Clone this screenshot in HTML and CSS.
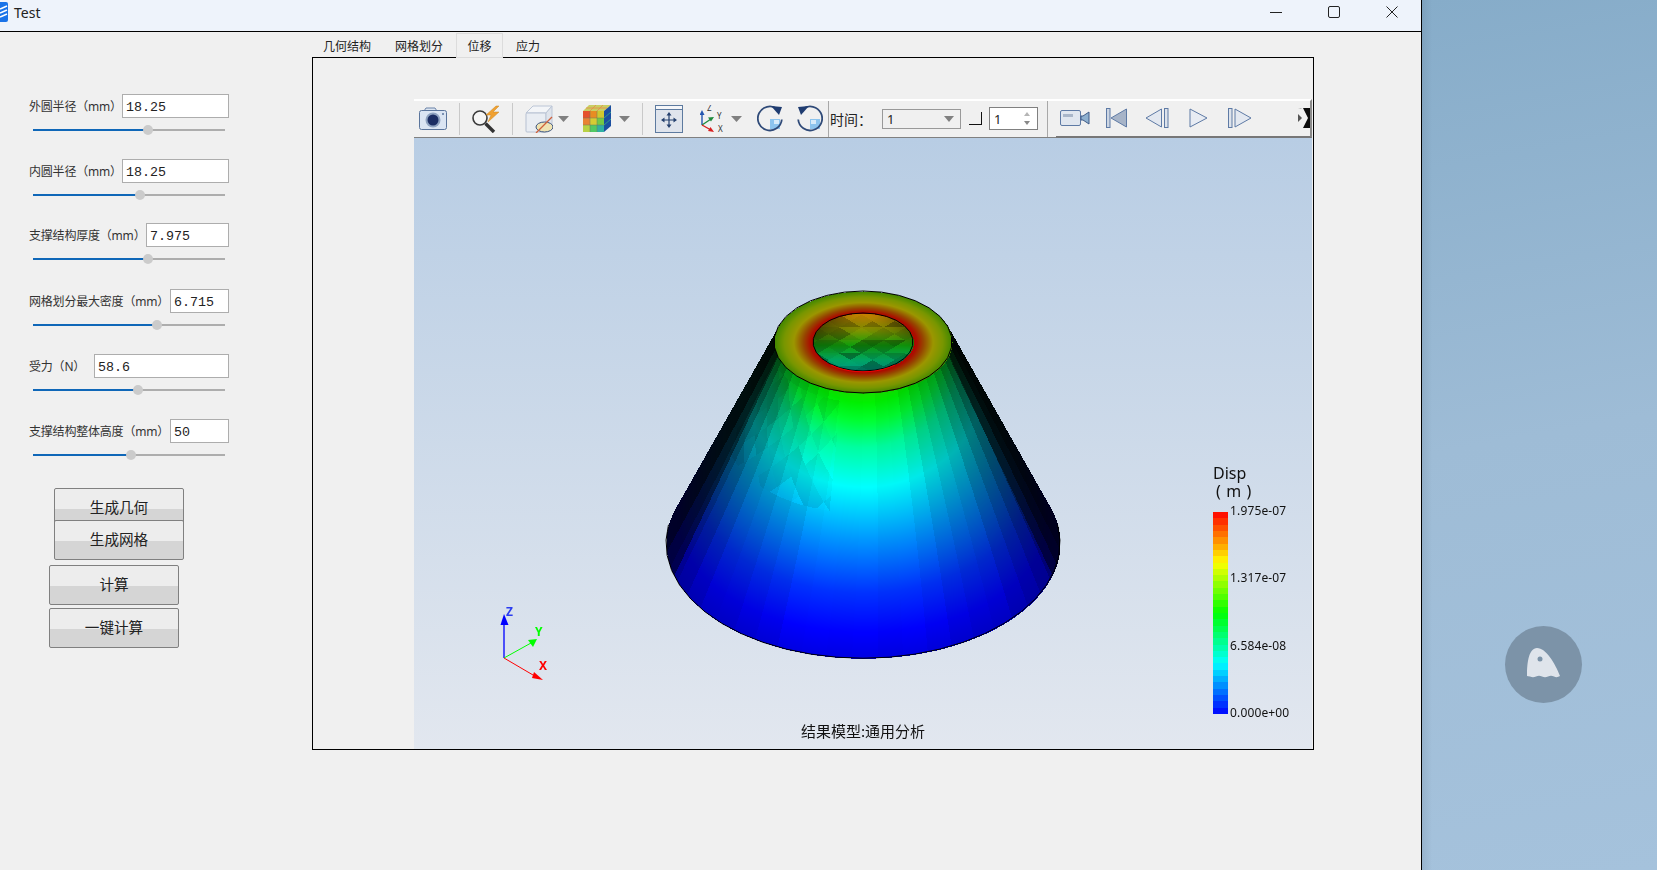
FILE: index.html
```html
<!DOCTYPE html>
<html lang="zh-CN">
<head>
<meta charset="utf-8">
<title>Test</title>
<link rel="stylesheet" href="styles.css">
</head>
<body>
<div class="window">
  <header class="titlebar">
    <svg class="app-icon" width="8" height="20" viewBox="0 0 8 20"><path d="M0 0H6Q8 0 8 2V18Q8 20 6 20H0Z" fill="#1a73e8"/><path d="M0 7L7 4M0 11L7 8M0 15L7 12" stroke="#fff" stroke-width="1.6"/></svg>
    <span class="app-title">Test</span>
    <div class="caption">
      <button class="cap-btn"><svg width="12" height="12" viewBox="0 0 12 12"><path d="M0 6.5H12" stroke="#222"/></svg></button>
      <button class="cap-btn"><svg width="12" height="12" viewBox="0 0 12 12"><rect x=".5" y=".5" width="11" height="11" rx="1.5" fill="none" stroke="#222"/></svg></button>
      <button class="cap-btn"><svg width="12" height="12" viewBox="0 0 12 12"><path d="M.5 .5L11.5 11.5M11.5 .5L.5 11.5" stroke="#222"/></svg></button>
    </div>
  </header>
  <div class="client">
    <aside class="params">
      <div class="param">
        <div class="field"><label>外圆半径（mm）</label><input class="w107" value="18.25"></div>
        <div class="slider"><i class="fill" style="width:115px"></i><i class="thumb"></i><i class="rest"></i></div>
      </div>
      <div class="param">
        <div class="field"><label>内圆半径（mm）</label><input class="w107" value="18.25"></div>
        <div class="slider"><i class="fill" style="width:107px"></i><i class="thumb"></i><i class="rest"></i></div>
      </div>
      <div class="param param-up">
        <div class="field"><label>支撑结构厚度（mm）</label><input class="w83" value="7.975"></div>
        <div class="slider"><i class="fill" style="width:115px"></i><i class="thumb"></i><i class="rest"></i></div>
      </div>
      <div class="param">
        <div class="field"><label>网格划分最大密度（mm）</label><input class="w59" value="6.715"></div>
        <div class="slider"><i class="fill" style="width:124px"></i><i class="thumb"></i><i class="rest"></i></div>
      </div>
      <div class="param">
        <div class="field"><label>受力（N）</label><input class="w135" value="58.6"></div>
        <div class="slider"><i class="fill" style="width:105px"></i><i class="thumb"></i><i class="rest"></i></div>
      </div>
      <div class="param">
        <div class="field"><label>支撑结构整体高度（mm）</label><input class="w59" value="50"></div>
        <div class="slider"><i class="fill" style="width:98px"></i><i class="thumb"></i><i class="rest"></i></div>
      </div>
      <div class="actions">
        <button class="push push-a">生成几何</button>
        <button class="push push-b">生成网格</button>
        <button class="push push-c">计算</button>
        <button class="push push-d">一键计算</button>
      </div>
    </aside>
    <main class="workspace">
      <nav class="tabs">
        <span class="tab">几何结构</span>
        <span class="tab">网格划分</span>
        <span class="tab tab-active">位移</span>
        <span class="tab">应力</span>
      </nav>
      <section class="panel">
        <div class="viewer">
          <div class="toolbars">
            <div class="bar bar-main">
              <svg class="t-cam" width="28" height="23" viewBox="0 0 28 23"><path d="M5 4L7 1H16L18 4" fill="#dce5f1" stroke="#6b83a8"/><rect x=".5" y="3.5" width="27" height="19" rx="2" fill="#dbe5f3" stroke="#5b759c"/><circle cx="14" cy="13" r="7.5" fill="#8ea2c0"/><circle cx="14" cy="13" r="5.5" fill="#1b2d63"/><circle cx="24" cy="7" r="1" fill="#5b759c"/></svg>
              <i class="sep"></i>
              <svg width="28" height="28" viewBox="0 0 28 28"><circle cx="8" cy="13" r="7" fill="#f6f6f6" stroke="#3a3a3a" stroke-width="1.6"/><path d="M13.5 18.5L22 27" stroke="#333" stroke-width="3.4"/><path d="M24 1L14 10H19L16 17L27 7H21L27 1Z" fill="#f0a030" stroke="#c98a2a" stroke-width=".5"/></svg>
              <i class="sep"></i>
              <svg width="28" height="28" viewBox="0 0 28 28"><path d="M1 8L8 1H27L21 8Z" fill="#f3f5f8" stroke="#bcc6d6"/><rect x="1" y="8" width="20" height="19" rx="1" fill="#e9edf3" stroke="#b7c1d2"/><path d="M21 8L27 1V20L21 27Z" fill="#dfe4ec" stroke="#bcc6d6"/><ellipse cx="19.5" cy="22" rx="8.5" ry="5" fill="#efe3b2" stroke="#3c557f"/><path d="M11 28L27 12" stroke="#d0603a" stroke-width="1.3"/></svg>
              <svg class="caret caret-a" width="11" height="6" viewBox="0 0 11 6"><path d="M0 0H11L5.5 6Z" fill="#808080"/></svg>
              <svg class="t-cube" width="28" height="27" viewBox="0 0 28 27">
                <path d="M0 6L6 0H28L21 6Z" fill="#c9cf63"/><path d="M7 6L13 0M14 6L20 0M3 3H24" stroke="#e8894a" stroke-width=".8"/>
                <path d="M21 6L28 0V21L21 27Z" fill="#1b4fa0"/><path d="M21 13L28 7M21 20L28 14" stroke="#2d9a8d"/>
                <rect y="6" width="7" height="7" fill="#e5512c"/><rect x="7" y="6" width="7" height="7" fill="#e88c22"/><rect x="14" y="6" width="7" height="7" fill="#cfc92f"/>
                <rect y="13" width="7" height="7" fill="#e98234"/><rect x="7" y="13" width="7" height="7" fill="#d6cc33"/><rect x="14" y="13" width="7" height="7" fill="#73c945"/>
                <rect y="20" width="7" height="7" fill="#b8d145"/><rect x="7" y="20" width="7" height="7" fill="#52c963"/><rect x="14" y="20" width="7" height="7" fill="#31b0a2"/>
                <path d="M7 6V27M14 6V27M0 13H21M0 20H21" stroke="#6b7a60" stroke-width=".5"/>
              </svg>
              <svg class="caret caret-b" width="11" height="6" viewBox="0 0 11 6"><path d="M0 0H11L5.5 6Z" fill="#808080"/></svg>
              <i class="sep sep-c"></i>
              <svg width="28" height="28" viewBox="0 0 28 28"><rect x=".5" y=".5" width="27" height="27" fill="#dfe4ec" stroke="#5d7a9f"/><rect x="1" y="1" width="26" height="3" fill="#f5f6f9"/><path d="M0 4.5H28" stroke="#5d7a9f"/><path d="M14 9V21M8 15H20" stroke="#24406e" stroke-width="1.2"/><path d="M14 7L11.5 10.5H16.5ZM14 23L11.5 19.500H16.500ZM6 15L9.500 12.500V17.500ZM22 15L18.500 12.500V17.500Z" fill="#24406e"/></svg>
              <svg class="t-axes" width="26" height="28" viewBox="0 0 26 28"><path d="M2 20V8" stroke="#2456b0" stroke-width="1.4"/><path d="M2 5L-.5 10H4.500Z" fill="#2456b0"/><path d="M2 20L11 14" stroke="#1d8a3c" stroke-width="1.4"/><path d="M14 12L8 12.500L11 16.500Z" fill="#1d8a3c"/><path d="M2 20L11 25" stroke="#d82020" stroke-width="1.4"/><path d="M14 27L8 26L10.500 22Z" fill="#d82020"/><text class="axis-mini" x="7" y="6">Z</text><text class="axis-mini" x="17" y="14">Y</text><text class="axis-mini" x="18" y="27">X</text></svg>
              <svg class="caret caret-c" width="11" height="6" viewBox="0 0 11 6"><path d="M0 0H11L5.500 6Z" fill="#808080"/></svg>
              <svg class="t-rot" width="26" height="28" viewBox="0 0 26 28"><rect x="13" y="14" width="10" height="10" fill="#8cc4ee"/><rect x="17" y="15" width="5" height="4" fill="#d6ebfa"/><path d="M20 3.800A12 12 0 1 0 24.800 14.500" fill="none" stroke="#2f4a78" stroke-width="1.8"/><path d="M14 1L25 2L22 10Z" fill="#1f3c70"/></svg>
              <svg class="t-rot2" width="26" height="28" viewBox="0 0 26 28"><rect x="13" y="14" width="10" height="10" fill="#8cc4ee"/><rect x="14" y="15" width="5" height="4" fill="#d6ebfa"/><path d="M6 3.800A12 12 0 1 1 1.200 14.500" fill="none" stroke="#2f4a78" stroke-width="1.8"/><path d="M12 1L1 2L4 10Z" fill="#1f3c70"/></svg>
              <i class="sep sep-t"></i>
              <span class="time-label">时间：</span>
              <div class="combo"><span>1</span><svg width="10" height="6" viewBox="0 0 10 6"><path d="M0 0H10L5 6Z" fill="#808080"/></svg></div>
              <i class="tick"></i>
              <div class="spin"><span>1</span><svg width="6" height="13" viewBox="0 0 6 13"><path d="M3 0L6 4H0Z" fill="#b5b5b5"/><path d="M3 13L6 9H0Z" fill="#888"/></svg></div>
              <i class="sep sep-end"></i>
            </div>
            <div class="bar bar-play">
              <svg width="30" height="16" viewBox="0 0 30 16"><rect x=".5" y=".5" width="20" height="15" rx="1.500" fill="#e0e6ef" stroke="#5e7aa5"/><rect x="3" y="4" width="10" height="3" fill="#a9b6c9"/><path d="M21 6L23 6L29 2V14L23 10H21Z" fill="#8eb0cf" stroke="#3f5b87"/></svg>
              <svg class="t-first" width="21" height="20" viewBox="0 0 21 20"><rect x=".5" y=".5" width="3.500" height="19" fill="#cdd6e3" stroke="#5e7aa5"/><path d="M20.500 1V19L5 10Z" fill="#a7b4c8" stroke="#5e7aa5"/></svg>
              <svg class="t-prev" width="24" height="20" viewBox="0 0 24 20"><path d="M16.500 1V19L1 10Z" fill="#e3e8f0" stroke="#5e7aa5"/><rect x="19.500" y=".5" width="3.500" height="19" fill="#dde3ec" stroke="#5e7aa5"/></svg>
              <svg class="t-play" width="19" height="20" viewBox="0 0 19 20"><path d="M1 1V19L18 10Z" fill="#e8ecf3" stroke="#5e7aa5"/></svg>
              <svg class="t-next" width="24" height="20" viewBox="0 0 24 20"><rect x=".5" y=".5" width="3.500" height="19" fill="#dde3ec" stroke="#5e7aa5"/><path d="M7 1V19L23 10Z" fill="#e3e8f0" stroke="#5e7aa5"/></svg>
              <svg class="t-more" width="12" height="20" viewBox="0 0 12 20"><path d="M5 0H12V20H5L10 10Z" fill="#0c0c0c"/><path d="M0 6L4 10L0 14Z" fill="#555"/><path d="M0 0H4L3 1Z" fill="#bbb"/></svg>
            </div>
          </div>
          <div class="scene">
            <canvas id="plot" class="plot" width="898" height="611"></canvas>
            <svg class="triad" width="80" height="100" viewBox="0 0 80 100">
              <path d="M33 68V28" stroke="#0000ff" stroke-width="1.300"/><path d="M33 24L29.500 35H37.500Z" fill="#0000ff"/>
              <path d="M33 68L60 53" stroke="#00ff00"/><path d="M66 49L57 50L62 57Z" fill="#00ff00"/>
              <path d="M33 68L62 85" stroke="#ff0000"/><path d="M72 90L63 82L61 88Z" fill="#ff0000"/>
              <text class="axis-z" x="35" y="26">Z</text><text class="axis-y" x="64" y="46">Y</text><text class="axis-x" x="68" y="80">X</text>
            </svg>
            <div class="legend">
              <div class="legend-title">Disp</div>
              <div class="legend-unit">( m )</div>
              <div class="legend-body">
                <div id="colorbar" class="colorbar"></div>
                <div class="legend-ticks"><span>1.975e-07</span><span>1.317e-07</span><span>6.584e-08</span><span>0.000e+00</span></div>
              </div>
            </div>
            <div class="scene-caption">结果模型:通用分析</div>
          </div>
        </div>
      </section>
    </main>
  </div>
</div>
<div class="desktop">
  <div class="float-btn">
    <svg class="ghost" width="33" height="30" viewBox="0 0 33 30"><path d="M0 28C0 14 2 0 10 0C19 0 28 15 33 28Q30 30 27 28.500Q24 27 21 28.500Q18 30 15 28.500Q12 27 9 28.500Q6 30 3 28.500Q1 28 0 28Z" fill="#dfe4eb"/><circle cx="13" cy="11" r="2.500" fill="#7c93a8"/></svg>
  </div>
</div>
<script src="app.js"></script>
</body>
</html>
```
FILE: styles.css
```css
* { box-sizing: border-box; }
html, body { margin: 0; height: 100%; }
body {
  display: flex;
  width: 1657px;
  height: 870px;
  overflow: hidden;
  font-family: "Noto Sans", "Noto Sans CJK SC", sans-serif;
  color: #222;
}
.window {
  width: 1422px;
  height: 870px;
  display: flex;
  flex-direction: column;
  background: #f0f0f0;
  border-right: 1px solid #000;
  flex: none;
}
.titlebar {
  height: 32px;
  flex: none;
  display: flex;
  align-items: flex-start;
  background: #eef3fb;
  border-bottom: 1px solid #000;
}
.app-icon { margin-top: 2px; flex: none; }
.app-title { margin-left: 6px; font-size: 14px; line-height: 26px; }
.caption { margin-left: auto; display: flex; }
.cap-btn {
  width: 58px;
  height: 24px;
  padding: 0;
  border: 0;
  background: none;
  display: flex;
  align-items: center;
  justify-content: center;
}
.client { flex: 1; display: flex; min-height: 0; }

/* parameters column */
.params { width: 311px; flex: none; padding: 62px 0 0 29px; }
.param { width: 200px; height: 65px; }
.param-up { margin-top: -1px; margin-bottom: 1px; }
.field { display: flex; justify-content: space-between; align-items: center; height: 24px; }
.field label { font-size: 12px; letter-spacing: -.2px; color: #333; white-space: nowrap; }
.field input {
  height: 24px;
  padding: 2px 3px 0;
  border: 1px solid #adadad;
  background: #fff;
  font: 13.33px "Liberation Mono", monospace;
  color: #222;
  outline: 0;
}
.w59 { width: 59px; }
.w83 { width: 83px; }
.w107 { width: 107px; }
.w135 { width: 135px; }
.slider { display: flex; align-items: center; margin: 7px 0 0 4px; width: 192px; height: 10px; }
.fill { display: block; height: 2px; background: #0f67b8; flex: none; }
.rest { display: block; height: 2px; background: #adadad; flex: 1; }
.thumb { display: block; width: 10px; height: 10px; margin: 0 -5px; border-radius: 50%; background: #cbcbcb; flex: none; position: relative; }
.actions { display: flex; flex-direction: column; align-items: flex-start; margin-top: 4px; }
.push {
  width: 130px;
  height: 40px;
  padding: 0 0 3px;
  border: 1px solid #808080;
  border-radius: 2px;
  background: linear-gradient(#ededed 0 20px, #d5d5d5 20px);
  font: 14.6px "Noto Sans CJK SC", sans-serif;
  color: #222;
}
.push-a { margin-left: 25px; }
.push-b { margin-left: 25px; margin-top: -8px; position: relative; }
.push-c { margin-left: 20px; margin-top: 5px; }
.push-d { margin-left: 20px; margin-top: 3px; }

/* tabs and panel */
.workspace { flex: 1; display: flex; flex-direction: column; padding-top: 1px; min-width: 0; }
.tabs { display: flex; height: 24px; flex: none; position: relative; z-index: 1; }
.tab { padding: 0 12px; font-size: 12px; line-height: 27px; height: 24px; }
.tab:last-child { padding-left: 13px; }
.tab-active {
  height: 25px;
  margin-left: 1px;
  padding: 0 10.5px;
  border: 1px solid #dcdcdc;
  background: #f0f0f0;
  line-height: 25px;
}
.panel {
  width: 1002px;
  height: 693px;
  margin-left: 1px;
  padding: 41px 1px 0 101px;
  border: 1px solid #000;
  background: #f0f0f0;
}
.viewer { height: 100%; display: flex; flex-direction: column; }

/* toolbars */
.toolbars { display: flex; height: 39px; flex: none; }
.bar { display: flex; align-items: center; height: 39px; border-top: 2px solid #fff; padding-bottom: 1px; }
.bar-main { width: 642px; flex: none; padding-left: 5px; gap: 12px; background: #f0f0f0; border-bottom: 1px solid #808080; }
.bar-main svg, .bar-play svg { flex: none; }
.sep { display: block; width: 1px; height: 32px; background: #c9c9c9; flex: none; }
.caret-a { margin-left: -7px; }
.t-cube { margin-left: 2px; }
.caret-b { margin-left: -4px; }
.t-axes { margin-left: 5px; }
.caret-c { margin-left: -7px; }
.t-rot { margin-left: 3px; }
.t-rot2 { margin-left: 2px; }
.sep-t { margin-left: -7px; height: 36px; background: #a8a8a8; }
.time-label { margin-left: -11px; width: 42px; font-size: 14px; white-space: nowrap; flex: none; }
.combo {
  margin-left: -2px;
  width: 79px;
  height: 20px;
  flex: none;
  display: flex;
  align-items: center;
  justify-content: space-between;
  padding: 0 6px 0 4px;
  border: 1px solid #999;
  font-size: 13px;
}
.tick {
  display: block;
  margin-left: -4px;
  width: 13px;
  height: 13px;
  flex: none;
  background: #f0f0f0;
  border-right: 1px solid #111;
  border-bottom: 1px solid #111;
}
.spin {
  margin-left: -5px;
  width: 49px;
  height: 23px;
  flex: none;
  display: flex;
  align-items: center;
  justify-content: space-between;
  padding: 0 7px 0 4px;
  border: 1px solid #808080;
  background: #fff;
  font-size: 13px;
}
.sep-end { margin-left: -3px; height: 36px; background: #a8a8a8; }
.bar-play { flex: 1; min-width: 0; padding-left: 4px; background: #f0f0f0; border-bottom: 2px solid #777; border-right: 2px solid #8a8a8a; }
.t-first { margin-left: 16px; }
.t-prev { margin-left: 18px; }
.t-play { margin-left: 20px; }
.t-next { margin-left: 20px; }
.t-more { margin-left: 46px; }

/* 3D scene */
.scene {
  position: relative;
  flex: 1;
  background: linear-gradient(#b8cde4, #e2e7ef);
  overflow: hidden;
}
.plot { display: block; }
.axis-mini { font: 8px "Noto Sans", sans-serif; fill: #333; }
.axis-z, .axis-y, .axis-x { font: 700 12px "Noto Sans", sans-serif; }
.axis-z { fill: #2a3cf0; }
.axis-y { fill: #00ff00; }
.axis-x { fill: #ff0000; }
.triad { position: absolute; left: 57px; top: 452px; }
.legend { position: absolute; left: 799px; top: 326px; color: #111; }
.legend-title { font-size: 16px; line-height: 19px; }
.legend-unit { font-size: 16px; line-height: 16px; padding-left: 3px; letter-spacing: .6px; }
.legend-body { display: flex; margin-top: 13px; }
.colorbar { width: 15px; height: 202px; flex: none; }
.legend-ticks {
  display: flex;
  flex-direction: column;
  justify-content: space-between;
  height: 217px;
  margin: -9px 0 0 2px;
  font-size: 12px;
  letter-spacing: .15px;
  line-height: 15px;
}
.scene-caption {
  position: absolute;
  left: 0;
  right: 0;
  bottom: 8px;
  text-align: center;
  font: 15px/20px "Noto Sans CJK SC", sans-serif;
  color: #111;
}

/* desktop */
.desktop {
  position: relative;
  flex: 1;
  background: linear-gradient(90deg, rgba(70,90,110,.14), rgba(70,90,110,0) 10px), linear-gradient(170deg, #86acc9, #9ebcd6 50%, #a5c2dc);
}
.float-btn {
  position: absolute;
  left: 83px;
  top: 626px;
  width: 77px;
  height: 77px;
  border-radius: 50%;
  background: #7c93a8;
  display: flex;
  align-items: center;
  justify-content: center;
}
.ghost { margin-top: -3px; }
```
FILE: app.js
```js
(function () {
  var OX = 414, OY = 138;
  var canvas = document.getElementById('plot');
  var ctx = canvas.getContext('2d');
  var W = canvas.width, H = canvas.height;
  var img = ctx.createImageData(W, H);
  var d = img.data;

  function ramp(stops, v) {
    if (v <= stops[0][0]) return stops[0].slice(1);
    for (var i = 1; i < stops.length; i++) {
      if (v <= stops[i][0]) {
        var a = stops[i - 1], b = stops[i], f = (v - a[0]) / (b[0] - a[0]);
        return [a[1] + (b[1] - a[1]) * f, a[2] + (b[2] - a[2]) * f, a[3] + (b[3] - a[3]) * f];
      }
    }
    return stops[stops.length - 1].slice(1);
  }
  function hash(a, b) {
    var s = Math.sin(a * 127.1 + b * 311.7) * 43758.5453;
    return s - Math.floor(s);
  }

  var SIDE = [[0, 20, 225, 0], [.03, 0, 240, 0], [.1, 0, 255, 50], [.2, 0, 255, 160], [.35, 0, 255, 255],
    [.55, 0, 150, 255], [.75, 0, 50, 255], [.9, 0, 0, 255], [1, 0, 0, 225]];
  var RING = [[0, 175, 5, 0], [.08, 170, 15, 0], [.25, 150, 70, 0], [.5, 155, 150, 0], [.75, 120, 150, 0], [1, 65, 135, 0]];
  var HOLE = [[0, 185, 115, 0], [.3, 115, 135, 0], [.55, 15, 145, 10], [.8, 0, 150, 90], [1, 0, 130, 115]];

  var CX = 863, CY = 342, K = 0.585, K2 = 1 / (K * K), D = 201;
  var DT = Math.PI / 24;

  for (var y = 0; y < H; y++) {
    for (var x = 0; x < W; x++) {
      var X = x + OX, Y = y + OY, u = X - CX, v = Y - CY, c = null;
      var q = Math.sqrt(u * u / 7921 + v * v / 2601);
      if (q <= 1) {
        if (q >= 0.565) {
          c = ramp(RING, (q - 0.565) / 0.435);
        } else {
          var hv = (Y - 313) / 58;
          var gy = (Y - 340) / 13;
          var da = (X - 861) / 22 + gy, db = (X - 861) / 22 - gy;
          var ci = Math.floor(da), cj = Math.floor(db);
          var tri = Math.floor(gy + 100) % 2;
          var fac = 0.72 + 0.42 * hash(ci + tri * 5, cj);
          var vig = 1 - 0.75 * Math.pow(Math.abs(u) / 50, 2) * (1 - Math.min(hv * 1.6, 1));
          var base = ramp(HOLE, hv);
          c = [base[0] * fac * vig, base[1] * fac * vig, base[2] * fac * vig];
        }
      } else {
        var A = K2 * D * D - 11664;
        var B = -(K2 * 2 * D * v + 19224);
        var C = u * u + K2 * v * v - 7921;
        var disc = B * B - 4 * A * C;
        if (disc >= 0) {
          var t = (-B - Math.sqrt(disc)) / (2 * A);
          if (t >= -0.02 && t <= 1) {
            t = Math.max(t, 0);
            var rx = 89 + 108 * t, ry = rx * K;
            var sn = Math.max(-1, Math.min(1, u / rx));
            var cs = (v - D * t) / ry;
            var th = Math.atan2(sn, Math.max(cs, 0.001));
            var th2 = th + 0.06 * t;
            var i = Math.floor(th2 / DT);
            var thq = (i + 0.5) * DT;
            var f;
            if (th < -0.25 && t < 0.45 && t > 0.03) {
              var la = th / 0.2 + t / 0.12, lb = th / 0.2 - t / 0.12;
              f = 0.92 + 0.16 * hash(Math.floor(la), Math.floor(lb));
            } else {
              f = 0.97 + 0.06 * hash(i, 3);
            }
            var p = 1.05 - 0.65 * t;
            var br = Math.pow(Math.max(Math.cos(thq), 0.03), p) * f;
            if (Math.abs(sn) > 0.96) br *= 0.55;
            var sc = ramp(SIDE, t + 0.12 * sn * sn * (1 - t));
            c = [sc[0] * br, sc[1] * br, sc[2] * br];
          }
        }
      }
      if (c) {
        var o = (y * W + x) * 4;
        d[o] = Math.min(c[0], 255); d[o + 1] = Math.min(c[1], 255); d[o + 2] = Math.min(c[2], 255); d[o + 3] = 255;
      }
    }
  }
  ctx.putImageData(img, 0, 0);

  function poly(cx, cy, rx, ry, n, from, to, close, color) {
    ctx.beginPath();
    for (var i = 0; i <= n; i++) {
      var a = from + (to - from) * i / n;
      var px = cx + rx * Math.sin(a) - OX, py = cy + ry * Math.cos(a) - OY;
      if (i) ctx.lineTo(px, py); else ctx.moveTo(px, py);
    }
    if (close) ctx.closePath();
    ctx.strokeStyle = color;
    ctx.lineWidth = 1;
    ctx.stroke();
  }
  poly(CX, CY + D, 197, 197 * K, 26, -1.73, 1.73, false, '#000');
  poly(CX, CY, 89, 51, 30, 0, Math.PI * 2, true, '#000');
  poly(CX, CY, 50, 29, 26, 0, Math.PI * 2, true, '#000');
  poly(CX, CY + 0.8, 50, 29, 10, -0.7, 0.7, false, '#f00000');

  var JET = [[0, 255, 0, 0], [.25, 255, 255, 0], [.5, 0, 255, 0], [.75, 0, 255, 255], [1, 0, 0, 255]];
  var parts = [], N = 32;
  for (var n = 0; n < N; n++) {
    var col = ramp(JET, (n + .5) / N).map(Math.round);
    var rgb = 'rgb(' + col.join(',') + ')';
    parts.push(rgb + ' ' + (n * 100 / N) + '% ' + ((n + 1) * 100 / N) + '%');
  }
  document.getElementById('colorbar').style.background = 'linear-gradient(' + parts.join(',') + ')';
})();
```
